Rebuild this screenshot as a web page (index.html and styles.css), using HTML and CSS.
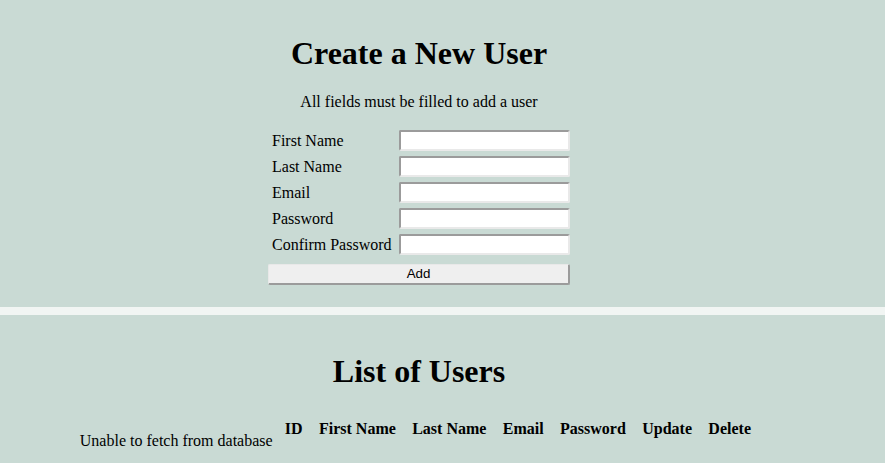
FILE: index.html
```html
<!DOCTYPE html>
<html>
<head>
<meta charset="utf-8">
<link rel="stylesheet" href="styles.css">
</head>
<body>
<section class="panel panel-create">
  <h1 class="title">Create a New User</h1>
  <p class="note">All fields must be filled to add a user</p>
  <form class="user-form">
    <label class="label" for="fn">First Name</label><input class="field" id="fn" type="text">
    <label class="label" for="ln">Last Name</label><input class="field" id="ln" type="text">
    <label class="label" for="em">Email</label><input class="field" id="em" type="text">
    <label class="label" for="pw">Password</label><input class="field" id="pw" type="password">
    <label class="label" for="cp">Confirm Password</label><input class="field" id="cp" type="password">
    <button class="add-btn" type="button">Add</button>
  </form>
</section>
<section class="panel panel-list">
  <h1 class="title">List of Users</h1>
  <div class="list-row">
    <span class="error">Unable to fetch from database</span>
    <table class="users-table">
      <thead>
        <tr><th>ID</th><th>First Name</th><th>Last Name</th><th>Email</th><th>Password</th><th>Update</th><th>Delete</th></tr>
      </thead>
    </table>
  </div>
</section>
</body>
</html>
```

FILE: styles.css
```css
html, body {
  margin: 0;
  padding: 0;
}
body {
  background: #f1f5f3;
  font-family: "Liberation Serif", "Times New Roman", serif;
  font-size: 16px;
  color: #000;
  height: 463px;
  overflow: hidden;
}
.panel {
  background: #c9dad4;
  padding-right: 47px;
  display: flow-root;
}
.panel-create {
  height: 307px;
  box-sizing: border-box;
  margin-bottom: 8px;
}
.panel-list {
  height: 148px;
}
.title {
  font-size: 32px;
  font-weight: bold;
  text-align: center;
  margin: 0;
  line-height: 37px;
}
.panel-create .title {
  margin-top: 35px;
}
.panel-list .title {
  margin-top: 38px;
}
.note {
  text-align: center;
  margin: 21px 0 19px;
  line-height: 18px;
}
.user-form {
  width: 302px;
  margin: 0 auto;
  display: grid;
  grid-template-columns: 131px 171px;
  grid-auto-rows: 21px;
  row-gap: 5px;
}
.label {
  padding-left: 4px;
  line-height: 21px;
  white-space: nowrap;
}
.field {
  width: 171px;
  height: 21px;
  box-sizing: border-box;
  border-style: solid;
  border-width: 2px;
  border-color: #9b9b9b #e9e9e9 #e9e9e9 #9b9b9b;
  border-radius: 2px;
  background: #fff;
  font-family: "Liberation Sans", Arial, sans-serif;
  font-size: 13.33px;
  padding: 1px 2px;
  margin: 0;
  outline: none;
}
.add-btn {
  grid-column: 1 / 3;
  height: 21px;
  margin-top: 4px;
  box-sizing: border-box;
  background: #efefef;
  border-style: solid;
  border-width: 1px 2px 2px 1px;
  border-color: #e8e8e8 #9b9b9b #9b9b9b #e8e8e8;
  border-radius: 2px;
  font-family: "Liberation Sans", Arial, sans-serif;
  font-size: 13.33px;
  line-height: 16px;
  color: #000;
  padding: 0;
}
.list-row {
  display: flex;
  justify-content: center;
  align-items: flex-start;
  margin-top: 27px;
  margin-left: 2px;
}
.error {
  line-height: 18px;
  margin-top: 15px;
  margin-right: 3px;
}
.users-table {
  border-spacing: 2px;
}
.users-table th {
  padding: 1px 7.2px;
  font-weight: bold;
  line-height: 18px;
}
```
